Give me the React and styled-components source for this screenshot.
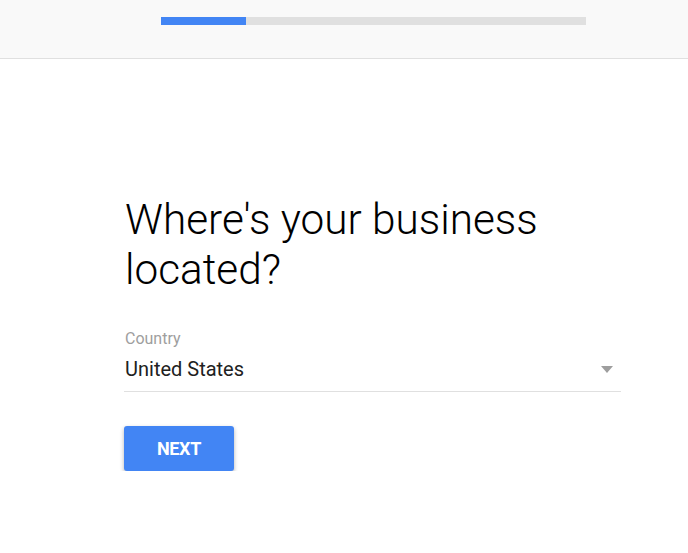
import styled, { createGlobalStyle } from "styled-components";

const GlobalStyle = createGlobalStyle`
  body {
    margin: 0;
    background: #ffffff;
    font-family: Roboto, "Liberation Sans", Arial, sans-serif;
  }
`;

const Header = styled.header`
  background: #f9f9f9;
  border-bottom: 1px solid #e0e0e0;
  display: flex;
  padding-left: 161px;
  padding-top: 17px;
  height: 41px;
`;

const Track = styled.div`
  width: 425px;
  height: 8px;
  background: #e0e0e0;
  display: flex;
`;

const Fill = styled.div`
  height: 100%;
  background: #4285f4;
`;

const Main = styled.main`
  width: 497px;
  margin-left: 124px;
  padding-top: 136px;
`;

const Title = styled.h1`
  margin: 0 0 0 1px;
  font-weight: 300;
  font-size: 42.3px;
  line-height: 50px;
  color: #000000;
`;

const Field = styled.div`
  margin-top: 34px;
  padding-left: 1px;
  border-bottom: 1px solid #e0e0e0;
  padding-bottom: 10px;
`;

const Label = styled.div`
  font-size: 16px;
  color: #9e9e9e;
  line-height: 19px;
`;

const SelectRow = styled.div`
  display: flex;
  align-items: center;
  justify-content: space-between;
  margin-top: 9px;
  padding-right: 8px;
`;

const Value = styled.span`
  font-size: 20px;
  color: #212121;
  line-height: 24px;
`;

const Caret = styled.span`
  width: 0;
  height: 0;
  border-left: 6px solid transparent;
  border-right: 6px solid transparent;
  border-top: 7px solid #9e9e9e;
`;

const NextButton = styled.button`
  margin-top: 34px;
  width: 110px;
  height: 45px;
  border: none;
  border-radius: 3px;
  background: #4285f4;
  color: #ffffff;
  font-family: Roboto, "Liberation Sans", Arial, sans-serif;
  font-weight: 700;
  font-size: 18px;
  letter-spacing: -0.3px;
  box-shadow: 0 2px 4px rgba(0, 0, 0, 0.3);
  cursor: pointer;
`;

export default function App() {
  const progress = 20;
  return (
    <>
      <GlobalStyle />
      <Header>
        <Track>
          <Fill style={{ width: `${progress}%` }} />
        </Track>
      </Header>
      <Main>
        <Title>
          Where's your business
          <br />
          located?
        </Title>
        <Field>
          <Label>Country</Label>
          <SelectRow>
            <Value>United States</Value>
            <Caret />
          </SelectRow>
        </Field>
        <NextButton>NEXT</NextButton>
      </Main>
    </>
  );
}
